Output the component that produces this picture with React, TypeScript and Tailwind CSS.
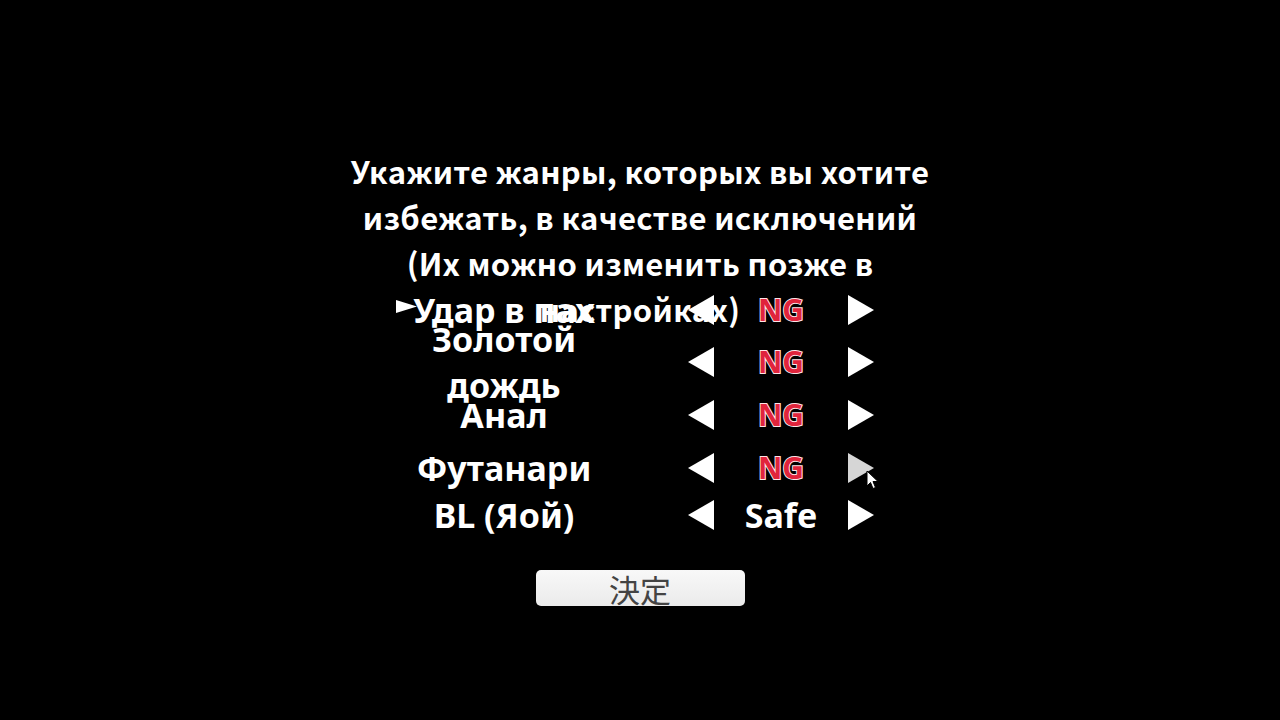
import React from 'react';

type Row = { label: string; value: 'NG' | 'Safe'; h: string; hoverRight?: boolean; cursor?: boolean };

const ROWS: Row[] = [
  { label: 'Удар в пах', value: 'NG', h: 'h-[54px]', cursor: true },
  { label: 'Золотой дождь', value: 'NG', h: 'h-[50px]' },
  { label: 'Анал', value: 'NG', h: 'h-[56px]' },
  { label: 'Футанари', value: 'NG', h: 'h-[50px]', hoverRight: true },
  { label: 'BL (Яой)', value: 'Safe', h: 'h-[44px]' },
];

function Arrow({ dir, light }: { dir: 'left' | 'right'; light?: boolean }) {
  const pts = dir === 'left' ? '26,0 26,30 0,15' : '0,0 0,30 26,15';
  return (
    <svg width="26" height="30" viewBox="0 0 26 30" className="block">
      <polygon points={pts} fill={light ? '#d6d6d6' : '#ffffff'} />
    </svg>
  );
}

function Pointer() {
  return (
    <svg width="14" height="20" viewBox="0 0 14 20" className="absolute left-[18px] top-[27px]">
      <path d="M1 1 L1 16 L4.5 12.5 L7 18.5 L9.5 17.5 L7 11.5 L12 11.5 Z" fill="#ffffff" stroke="#000000" strokeWidth="1" strokeLinejoin="round" />
    </svg>
  );
}

export default function App() {
  return (
    <div className="w-[1280px] h-[720px] bg-black overflow-hidden flex justify-center">
      <div className="w-[640px] pt-[148px] flex flex-col items-center">
        <div className="h-[135px] w-full">
          <p className="text-center text-white text-[31px] leading-[46px] font-bold font-['Noto_Sans_CJK_JP',sans-serif] tracking-[0.3px] whitespace-nowrap">
            Укажите жанры, которых вы хотите
            <br />
            избежать, в качестве исключений
            <br />
            (Их можно изменить позже в
            <br />
            настройках)
          </p>
        </div>

        <div className="w-full flex flex-col">
          {ROWS.map((r) => (
            <div key={r.label} className={`${r.h} relative flex items-center`}>
              <div className="w-[368px] h-full flex items-center justify-center shrink-0">
                <span className="w-[230px] shrink-0 text-center text-white text-[34px] leading-[46px] font-bold font-['Noto_Sans',sans-serif]">
                  {r.label}
                </span>
              </div>
              {r.cursor && (
                <svg width="21" height="13" viewBox="0 0 21 13" className="absolute left-[76px] top-[17px]">
                  <polygon points="0,0 21,6.5 0,13" fill="#ffffff" />
                </svg>
              )}
              <div className="w-[26px] shrink-0">
                <Arrow dir="left" />
              </div>
              <div className="w-[134px] shrink-0 flex justify-center">
                {r.value === 'NG' ? (
                  <span className="text-[30px] leading-none font-bold font-['Noto_Sans',sans-serif] text-[#e0243c] [-webkit-text-stroke:2px_#ffe4e8] [paint-order:stroke_fill]">
                    NG
                  </span>
                ) : (
                  <span className="text-[34px] leading-none font-bold font-['Noto_Sans',sans-serif] text-white">Safe</span>
                )}
              </div>
              <div className="w-[26px] shrink-0 relative h-full flex items-center">
                <Arrow dir="right" light={r.hoverRight} />
                {r.hoverRight && <Pointer />}
              </div>
            </div>
          ))}
        </div>

        <button className="mt-[33px] w-[209px] h-[36px] rounded-[5px] bg-gradient-to-b from-[#f8f8f8] to-[#ebebeb] flex items-center justify-center text-[#444444] text-[31px] leading-none font-['Noto_Sans_CJK_JP',sans-serif] font-normal">
          決定
        </button>
      </div>
    </div>
  );
}
